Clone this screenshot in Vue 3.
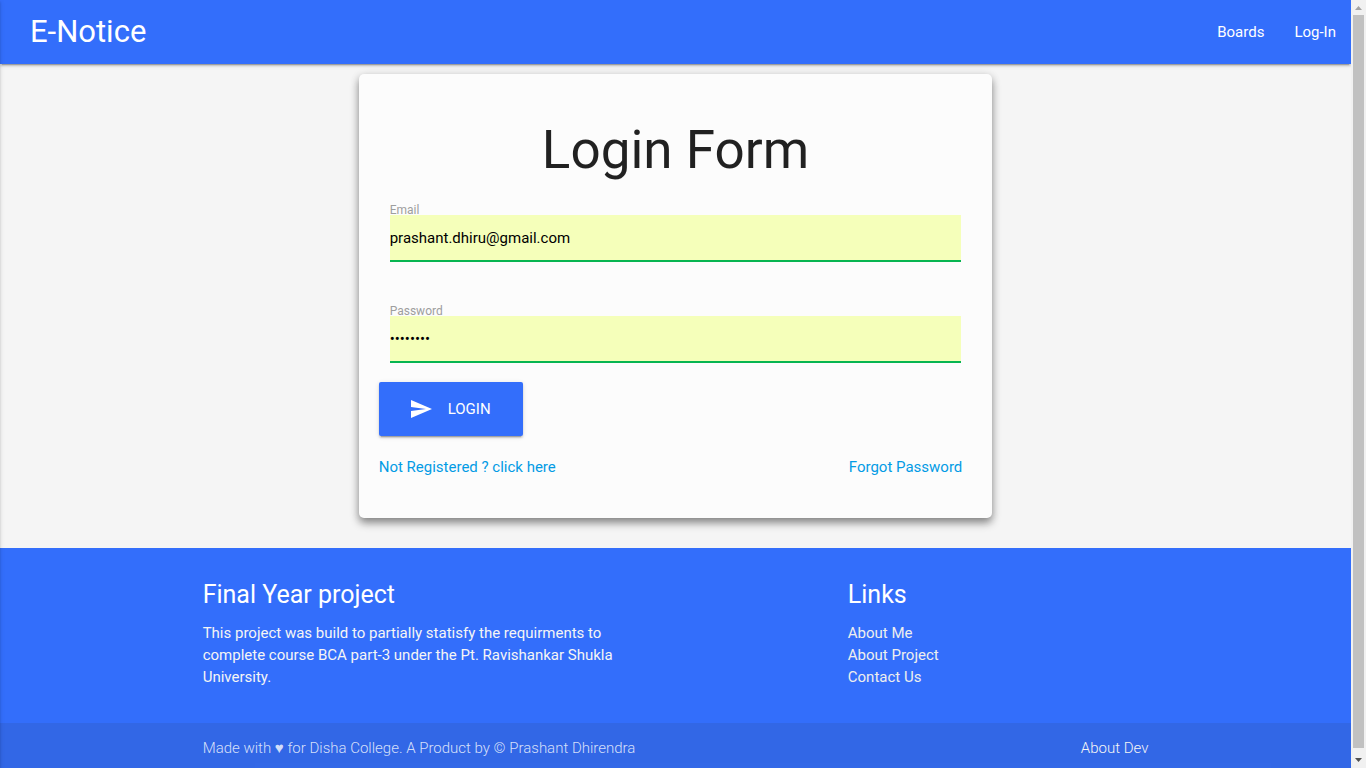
<script setup>
import { ref } from 'vue'

const email = ref('prashant.dhiru@gmail.com')
const password = ref('password')
const navLinks = ['Boards', 'Log-In']
const footerLinks = ['About Me', 'About Project', 'Contact Us']
</script>

<template>
  <div class="shell">
    <div class="page">
      <header class="navbar">
        <a class="brand" href="#">E-Notice</a>
        <nav class="nav-links">
          <a v-for="link in navLinks" :key="link" href="#">{{ link }}</a>
        </nav>
      </header>

      <main class="container">
        <form class="card" @submit.prevent>
          <h1>Login Form</h1>
          <div class="field">
            <label for="email">Email</label>
            <input id="email" v-model="email" type="email" />
          </div>
          <div class="field">
            <label for="password">Password</label>
            <input id="password" v-model="password" type="password" />
          </div>
          <button class="submit" type="submit">
            <svg viewBox="0 0 24 24" width="24" height="24" aria-hidden="true">
              <path fill="currentColor" d="M2.01 21L23 12 2.01 3 2 10l15 2-15 2z" />
            </svg>
            <span>LOGIN</span>
          </button>
          <div class="help">
            <a href="#">Not Registered ? click here</a>
            <a href="#">Forgot Password</a>
          </div>
        </form>
      </main>

      <footer class="footer">
        <div class="container">
          <div class="row">
            <section class="about">
              <h2>Final Year project</h2>
              <p>
                This project was build to partially statisfy the requirments to complete course BCA
                part-3 under the Pt. Ravishankar Shukla University.
              </p>
            </section>
            <section class="links">
              <h2>Links</h2>
              <ul>
                <li v-for="link in footerLinks" :key="link">
                  <a href="#">{{ link }}</a>
                </li>
              </ul>
            </section>
          </div>
        </div>
        <div class="copyright">
          <div class="container copyright-row">
            <span>Made with ♥ for Disha College. A Product by © Prashant Dhirendra</span>
            <a href="#">About Dev</a>
          </div>
        </div>
      </footer>
      <div class="drawer-edge"></div>
    </div>

    <div class="scrollbar" aria-hidden="true">
      <svg viewBox="0 0 15 15" width="15" height="15">
        <path fill="#a3a3a3" d="M4 10h7L7.5 6z" />
      </svg>
      <div class="thumb"></div>
      <svg viewBox="0 0 15 15" width="15" height="15">
        <path fill="#505050" d="M4 5h7L7.5 9z" />
      </svg>
    </div>
  </div>
</template>

<style>
body {
  margin: 0;
  overflow: hidden;
}
</style>

<style scoped>
.shell,
.shell * {
  box-sizing: border-box;
}
.shell {
  display: flex;
  height: 100vh;
  font-family: Roboto, 'DejaVu Sans', sans-serif;
  font-size: 15px;
  line-height: 22px;
  color: rgba(0, 0, 0, 0.87);
  background: #f5f5f5;
}
a {
  text-decoration: none;
}
h1,
h2 {
  margin: 0;
  font-weight: 400;
}
.page {
  position: relative;
  flex: 1;
  min-width: 0;
  overflow: hidden;
}
.navbar {
  display: flex;
  align-items: center;
  justify-content: space-between;
  height: 64px;
  padding: 0 0 0 30px;
  background: #336efb;
  box-shadow: 0 2px 2px 0 rgba(0, 0, 0, 0.14), 0 1px 5px 0 rgba(0, 0, 0, 0.12),
    0 3px 1px -2px rgba(0, 0, 0, 0.2);
}
.navbar a {
  color: #fff;
}
.navbar .brand {
  font-size: 31px;
  line-height: 64px;
}
.nav-links {
  display: flex;
}
.nav-links a {
  padding: 0 15px;
}
.container {
  width: 70%;
  margin: 0 auto;
}
.card {
  width: 67%;
  margin: 10px auto 30px;
  padding: 46px 20px 40px;
  border-radius: 5px;
  background: #fcfcfc;
  box-shadow: 0 5px 8px 0 rgba(0, 0, 0, 0.42), 0 1px 10px 0 rgba(0, 0, 0, 0.1);
}
.card h1 {
  margin-bottom: 24px;
  font-size: 53px;
  line-height: 60px;
  text-align: center;
}
.field {
  display: flex;
  flex-direction: column;
  margin: 0 11px 43px;
}
.field label {
  height: 11px;
  font-size: 12px;
  line-height: 12px;
  color: #9e9e9e;
}
.field input {
  width: 100%;
  height: 47px;
  padding: 0;
  border: 0;
  border-bottom: 2px solid #07b551;
  border-radius: 0;
  outline: 0;
  background: #f5ffba;
  color: #000;
  font: inherit;
}
.field + .submit {
  margin-top: -24px;
}
.submit {
  display: flex;
  align-items: center;
  gap: 15px;
  min-width: 144px;
  height: 54px;
  padding: 0 30px;
  border: 0;
  border-radius: 2px;
  background: #336efb;
  color: #fff;
  font: inherit;
  box-shadow: 0 2px 2px 0 rgba(0, 0, 0, 0.14), 0 1px 5px 0 rgba(0, 0, 0, 0.12),
    0 3px 1px -2px rgba(0, 0, 0, 0.2);
}
.help {
  display: flex;
  justify-content: space-between;
  margin: 20px 10px 0 0;
}
.help a {
  color: #039be5;
}
.footer {
  background: #336efb;
  color: #fff;
}
.row {
  display: flex;
  margin: 0 -11px;
  padding: 31px 0 35px;
}
.about {
  width: 50%;
  padding: 0 11px;
}
.links {
  width: 33.333%;
  margin-left: 16.667%;
  padding: 0 11px;
}
.footer h2 {
  margin-bottom: 11px;
  font-size: 25px;
  line-height: 32px;
}
.footer p,
.footer ul {
  margin: 0;
  padding: 0;
  list-style: none;
  color: #f5f5f5;
}
.links a {
  color: #eee;
}
.copyright {
  background: rgba(51, 51, 51, 0.1);
  color: rgba(255, 255, 255, 0.8);
  font-weight: 300;
}
.copyright-row {
  display: flex;
  align-items: center;
  justify-content: space-between;
  height: 50px;
}
.copyright a {
  color: #f5f5f5;
}
/* Shadow cast by the closed side drawer that sits just off the left edge. */
.drawer-edge {
  position: absolute;
  top: 0;
  bottom: 0;
  right: 100%;
  width: 20px;
  box-shadow: 0 2px 2px 0 rgba(0, 0, 0, 0.14), 0 1px 5px 0 rgba(0, 0, 0, 0.12),
    0 3px 1px -2px rgba(0, 0, 0, 0.2);
}
.scrollbar {
  display: flex;
  flex-direction: column;
  width: 15px;
  background: #f1f1f1;
}
.thumb {
  flex: 1;
  margin: 0 2px 5px;
  background: #c1c1c1;
}
</style>
